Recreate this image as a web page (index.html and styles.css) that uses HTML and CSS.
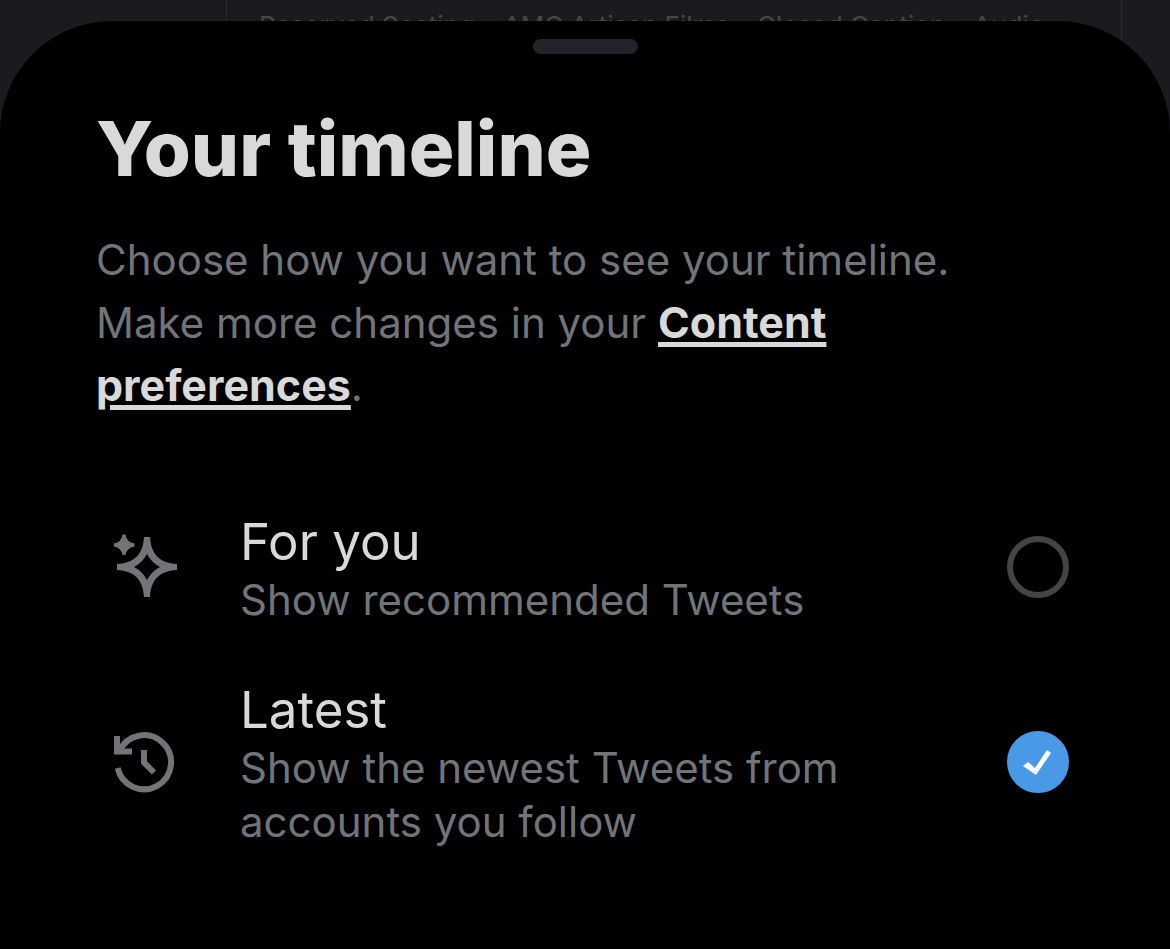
FILE: index.html
```
<!DOCTYPE html>
<html lang="en">
<head>
    <meta charset="UTF-8">
    <meta name="viewport" content="width=device-width, initial-scale=1.0">
    <title>Your timeline</title>
    <link rel="stylesheet" href="styles.css">
</head>
<body>
    <div class="backdrop">
        <div class="card">
            <span>Reserved Seating</span>
            <span>AMC Artisan Films</span>
            <span>Closed Caption</span>
            <span>Audio</span>
        </div>
    </div>
    <main class="sheet">
        <div class="handle"></div>
        <h1>Your timeline</h1>
        <p class="intro">Choose how you want to see your timeline. Make more changes in your <a href="#">Content preferences</a>.</p>
        <form class="options">
            <label class="option" for="for-you">
                <svg class="icon" viewBox="0 0 66 66" aria-hidden="true">
                    <path class="fill" d="M9.500 0.500h3Q13.500 8 21.500 9.500v3Q13.500 14 12.500 21h-3Q8.500 14 1 12.500v-3Q8.500 8 9.500 0.500z"/>
                    <path class="fill" fill-rule="evenodd" d="M31 3h6C38 20 46 29 64 30v6C46 37 38 46 37 63h-6C30 46 22 37 4 36v-6C22 29 30 20 31 3zM34 20Q29.500 28.500 21 33 29.500 37.500 34 46 38.500 37.500 47 33 38.500 28.500 34 20z"/>
                </svg>
                <span class="text">
                    <span class="name">For you</span>
                    <span class="detail">Show recommended Tweets</span>
                </span>
                <input type="radio" name="timeline" id="for-you">
            </label>
            <label class="option" for="latest">
                <svg class="icon" viewBox="0 0 66 66" aria-hidden="true">
                    <path class="line" d="M4.700 39A27 27 0 1 0 6.500 22"/>
                    <path class="line" d="M4 7v15.500h15"/>
                    <path class="line" d="M31 21v12.500l10 10"/>
                </svg>
                <span class="text">
                    <span class="name">Latest</span>
                    <span class="detail">Show the newest Tweets from accounts you follow</span>
                </span>
                <input type="radio" name="timeline" id="latest" checked>
            </label>
        </form>
    </main>
</body>
</html>
```
FILE: styles.css
```
* {
    box-sizing: border-box;
}
body {
    margin: 0;
    min-height: 100vh;
    padding-top: 21px;
    display: flex;
    flex-direction: column;
    background-color: #1a1b1e;
    color: #d9d9d9;
    font-family: Inter, "Liberation Sans", sans-serif;
}
/* page that is dimmed behind the sheet */
.backdrop {
    position: absolute;
    top: 0;
    left: 0;
    right: 0;
    height: 60px;
    padding: 0 48px 0 226px;
    overflow: hidden;
}
.card {
    display: flex;
    gap: 28px;
    height: 100%;
    padding: 10px 32px;
    border: 1px solid #2a2b2e;
    border-width: 0 1px;
    color: #46474a;
    font-size: 26px;
    line-height: 32px;
    white-space: nowrap;
}
.sheet {
    position: relative;
    flex: 1;
    padding: 18px 96px 96px;
    border-radius: 112px 112px 0 0;
    background-color: #000;
}
.handle {
    width: 105px;
    height: 15px;
    margin: 0 auto;
    border-radius: 8px;
    background-color: #212428;
}
h1 {
    margin: 46px 0 32px;
    font-size: 76px;
    font-weight: 800;
    line-height: 96px;
}
.intro {
    max-width: 880px;
    margin: 0;
    color: #717478;
    font-size: 42px;
    line-height: 63px;
}
.intro a {
    color: #d9d9d9;
    font-size: 43px;
    font-weight: 700;
    line-height: 1;
    text-decoration-thickness: 5px;
    text-underline-offset: 4px;
}
.options {
    display: flex;
    flex-direction: column;
    gap: 48px;
    margin-top: 90px;
}
.option {
    display: flex;
    align-items: center;
    padding: 0 5px 0 17px;
    cursor: pointer;
}
.icon {
    flex: none;
    width: 66px;
    height: 66px;
}
.fill {
    fill: #717478;
}
.line {
    fill: none;
    stroke: #717478;
    stroke-width: 6;
}
.text {
    flex: 1;
    display: flex;
    flex-direction: column;
    margin: 0 128px 0 61px;
    padding-top: 4px;
}
.name {
    font-size: 51px;
    line-height: 62px;
}
.detail {
    color: #717478;
    font-size: 42px;
    line-height: 54px;
}
input {
    appearance: none;
    position: relative;
    flex: none;
    width: 62px;
    height: 62px;
    margin: 0;
    border: 6px solid #424448;
    border-radius: 50%;
    cursor: pointer;
}
input:checked {
    border-color: #4a99e9;
    background-color: #4a99e9;
}
/* tick */
input:checked::after {
    content: "";
    position: absolute;
    inset: 0;
    background-color: #fff;
    clip-path: polygon(10px 29px, 15px 25px, 22px 31px, 34px 13px, 38px 16px, 23px 38px);
}
```
